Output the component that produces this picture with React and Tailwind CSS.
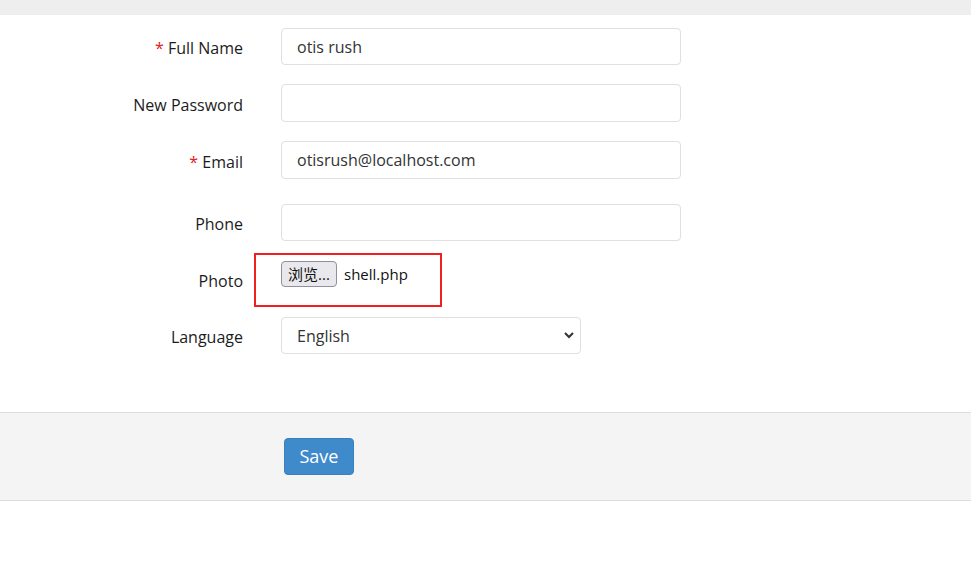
export default function App() {
  const font = { fontFamily: '"Open Sans", "Noto Sans", "Noto Sans CJK SC", sans-serif' };
  const labelCls = 'w-[243px] shrink-0 pt-[3px] text-right text-[16px] text-[#1c1c1c]';
  const inputCls =
    'h-[37px] w-[400px] rounded-[4px] border border-[#e0e0e0] bg-white px-[15px] text-[16px] text-[#333] outline-none';

  return (
    <div className="min-h-[565px] w-[971px] bg-white" style={font}>
      <div className="h-[15px] bg-[#eeeeee]" />

      <div className="pt-[13px]">
        <div className="flex h-[37px] items-center">
          <label className={`${labelCls} pt-[1px]`}>
            <span className="text-[#e02020]">*</span> Full Name
          </label>
          <input className={`${inputCls} ml-[38px]`} defaultValue="otis rush" />
        </div>

        <div className="mt-[19px] flex h-[38px] items-center">
          <label className={labelCls}>New Password</label>
          <input type="password" className={`${inputCls} ml-[38px] h-[38px]`} />
        </div>

        <div className="mt-[19px] flex h-[38px] items-center">
          <label className={labelCls}>
            <span className="text-[#e02020]">*</span> Email
          </label>
          <input className={`${inputCls} ml-[38px] h-[38px]`} defaultValue="otisrush@localhost.com" />
        </div>

        <div className="mt-[25px] flex h-[37px] items-center">
          <label className={labelCls}>Phone</label>
          <input className={`${inputCls} ml-[38px]`} />
        </div>

        <div className="relative mt-[20px] flex h-[40px] items-start">
          <label className={`${labelCls} pt-[8px]`}>Photo</label>
          <div className="ml-[38px] flex items-center">
            <span className="flex h-[26px] w-[56px] items-center justify-center rounded-[4px] border border-[#8f8f9d] bg-[#e9e9ed] text-[15px] text-[#111]">
              浏览...
            </span>
            <span className="ml-[7px] text-[15px] text-[#111]">shell.php</span>
          </div>
          <div className="pointer-events-none absolute left-[254px] top-[-8px] h-[54px] w-[188px] border-2 border-[#f02020]" />
        </div>

        <div className="mt-[16px] flex h-[37px] items-center">
          <label className={labelCls}>Language</label>
          <div className="relative ml-[38px]">
            <select
              className="h-[37px] w-[300px] appearance-none rounded-[4px] border border-[#e0e0e0] bg-white px-[15px] text-[16px] text-[#333] outline-none"
              defaultValue="English"
            >
              <option>English</option>
            </select>
            <svg
              className="pointer-events-none absolute right-[6px] top-[13px]"
              width="12"
              height="10"
              viewBox="0 0 12 10"
            >
              <path d="M2 3l4 4 4-4" fill="none" stroke="#333" strokeWidth="2" />
            </svg>
          </div>
        </div>
      </div>

      <div className="mt-[58px] flex h-[89px] items-center border-y border-[#dddddd] bg-[#f4f4f4]">
        <button className="ml-[284px] h-[37px] w-[70px] rounded-[4px] border border-[#3a7fc0] bg-[#3f8acb] text-[18px] text-white">
          Save
        </button>
      </div>
    </div>
  );
}
